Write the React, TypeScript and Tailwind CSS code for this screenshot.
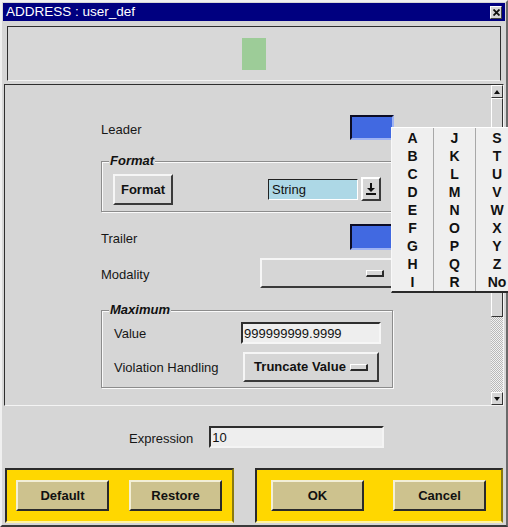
import React from 'react';

const raised = 'border-2 border-t-[#f6f6f6] border-l-[#f6f6f6] border-r-[#3a3a3a] border-b-[#3a3a3a]';
const sunken = 'border-2 border-t-[#2e2e2e] border-l-[#2e2e2e] border-r-[#f6f6f6] border-b-[#f6f6f6]';
const tanButton =
  'w-[93px] h-[31px] bg-[#cdc28e] border-2 border-t-[#f3efd6] border-l-[#f3efd6] border-r-[#2a2a2a] border-b-[#2a2a2a] flex items-center justify-center text-[13px] font-bold text-[#111]';

const letters = [
  ['A', 'B', 'C', 'D', 'E', 'F', 'G', 'H', 'I'],
  ['J', 'K', 'L', 'M', 'N', 'O', 'P', 'Q', 'R'],
  ['S', 'T', 'U', 'V', 'W', 'X', 'Y', 'Z', 'No'],
];

const Label = ({ children }: { children: React.ReactNode }) => (
  <span className="inline-block pt-[3px] text-[13px] text-[#161616] leading-none">{children}</span>
);

// little raised bar used by option menus
const OptionIndicator = () => (
  <span className="block w-[18px] h-[7px] bg-[#d6d6d6] border border-t-white border-l-white border-r-[#2a2a2a] border-b-[#2a2a2a] border-b-2 border-r-2" />
);

const GroupBox = ({ title, className, children }: { title: string; className: string; children: React.ReactNode }) => (
  <div className={`relative border border-[#8c8c8c] shadow-[inset_1px_1px_0_#fafafa,1px_1px_0_#fafafa] ${className}`}>
    <span className="absolute -top-[9px] left-[7px] bg-[#d6d6d6] px-[1px] text-[13px] leading-[16px] font-bold italic text-[#111]">
      {title}
    </span>
    {children}
  </div>
);

const ArrowButton = ({ up }: { up?: boolean }) => (
  <div className="h-[13px] bg-[#d6d6d6] border border-t-white border-l-white border-r-[#333] border-b-[#333] flex items-center justify-center">
    <svg width="6" height="4" viewBox="0 0 6 4">
      {up ? <polygon points="3,0 6,4 0,4" fill="#111" /> : <polygon points="0,0 6,0 3,4" fill="#111" />}
    </svg>
  </div>
);

export default function App() {
  return (
    <div className="relative w-[508px] h-[527px] overflow-hidden bg-[#d6d6d6] font-['Liberation_Sans',Arial,sans-serif]">
      <div className="w-[508px] h-[527px] border-2 border-t-[#f0f0f0] border-l-[#f0f0f0] border-r-[#6a6a6a] border-b-[#3a3a3a] p-[1px] flex flex-col">
        {/* title bar */}
        <div className="h-[18px] bg-[#000080] flex items-center justify-between pl-[3px] pr-[3px]">
          <span className="text-white text-[13.5px] leading-none">ADDRESS : user_def</span>
          <div className="w-[12px] h-[13px] bg-[#d6d6d6] border border-t-white border-l-white border-r-[#404040] border-b-[#404040] flex items-center justify-center">
            <svg width="7" height="7" viewBox="0 0 7 7">
              <path d="M0.5 0.5 L6.5 6.5 M6.5 0.5 L0.5 6.5" stroke="#111" strokeWidth="1.8" />
            </svg>
          </div>
        </div>

        {/* top preview panel */}
        <div className="mt-[5px] ml-[4px] w-[494px] h-[55px] bg-[#d8d8d8] border border-[#2e2e2e] border-b-[#f4f4f4] flex items-center justify-center">
          <div className="w-[24px] h-[32px] bg-[#9dcc98]" />
        </div>

        {/* main scroll panel */}
        <div className="mt-[3px] ml-[1px] w-[500px] h-[322px] border border-t-[#2e2e2e] border-l-[#2e2e2e] border-r-[#f4f4f4] border-b-[#f4f4f4] flex">
          <div className="flex-1">
            <div className="ml-[96px] w-[293px] flex flex-col">
              <div className="mt-[30px] h-[25px] flex items-center justify-between">
                <Label>Leader</Label>
                <div className="w-[44px] h-[25px] bg-[#4169e1] border-2 border-t-[#0c0c24] border-l-[#0c0c24] border-r-[#9fb3f2] border-b-[#9fb3f2]" />
              </div>

              <GroupBox title="Format" className="mt-[21px] h-[51px] w-[292px]">
                <div className="flex items-start pt-[12px] pl-[11px]">
                  <div className={`w-[60px] h-[31px] bg-[#d6d6d6] ${raised} flex items-center justify-center text-[13px] font-bold text-[#111]`}>
                    Format
                  </div>
                  <div className="ml-[95px] mt-[5px] w-[90px] h-[21px] bg-[#add8e6] border border-t-[#222] border-l-[#222] border-r-white border-b-white flex items-center pl-[3px] pt-[1px] text-[13px] text-[#111]">
                    String
                  </div>
                  <div className="ml-[3px] mt-[3px] w-[20px] h-[24px] bg-[#d6d6d6] border-2 border-t-white border-l-white border-r-[#3a3a3a] border-b-[#3a3a3a] flex items-center justify-center">
                    <svg width="10" height="12" viewBox="0 0 10 12">
                      <path d="M5 0 V7" stroke="#111" strokeWidth="2" />
                      <polygon points="1,5 9,5 5,9" fill="#111" />
                      <rect x="0" y="10" width="10" height="2" fill="#111" />
                    </svg>
                  </div>
                </div>
              </GroupBox>

              <div className="mt-[12px] h-[26px] flex items-center justify-between">
                <Label>Trailer</Label>
                <div className="w-[44px] h-[26px] bg-[#4169e1] border-2 border-t-[#0c0c24] border-l-[#0c0c24] border-r-[#9fb3f2] border-b-[#9fb3f2]" />
              </div>

              <div className="mt-[8px] h-[30px] flex items-center justify-between">
                <Label>Modality</Label>
                <div className={`w-[134px] h-[30px] bg-[#d6d6d6] ${raised} flex items-center justify-end pr-[8px]`}>
                  <OptionIndicator />
                </div>
              </div>

              <GroupBox title="Maximum" className="mt-[22px] h-[78px] w-[292px]">
                <div className="flex flex-col pl-[12px] pt-[11px]">
                  <div className="h-[22px] flex items-center">
                    <span className="w-[127px]"><Label>Value</Label></span>
                    <div className={`w-[140px] h-[22px] bg-[#eeeeee] ${sunken} flex items-center pl-[1px] pt-[1px] text-[13px] text-[#111]`}>
                      999999999.9999
                    </div>
                  </div>
                  <div className="mt-[8px] h-[30px] flex items-center">
                    <span className="w-[129px]"><Label>Violation Handling</Label></span>
                    <div className={`w-[136px] h-[30px] bg-[#d6d6d6] ${raised} flex items-center justify-center gap-[4px] text-[13px] font-bold text-[#111]`}>
                      Truncate Value
                      <OptionIndicator />
                    </div>
                  </div>
                </div>
              </GroupBox>
            </div>
          </div>

          {/* vertical scrollbar */}
          <div className="w-[12px] flex flex-col">
            <ArrowButton up />
            <div className="h-[219px] bg-[#d6d6d6] border border-t-white border-l-white border-r-[#333] border-b-[#333]" />
            <div className="flex-1 bg-[repeating-conic-gradient(#f2f2f2_0%_25%,#b8b8b8_0%_50%)] bg-[length:2px_2px]" />
            <ArrowButton />
          </div>
        </div>

        {/* expression row */}
        <div className="mt-[20px] h-[22px] flex items-center pl-[126px]">
          <Label>Expression</Label>
          <div className="ml-[16px] w-[175px] h-[22px] bg-[#eeeeee] border-2 border-t-[#2e2e2e] border-l-[#2e2e2e] border-r-[#f4f4f4] border-b-[#f4f4f4] flex items-center pl-[1px] pt-[1px] text-[13px] text-[#111]">
            10
          </div>
        </div>

        {/* bottom action panels */}
        <div className="mt-[20px] h-[55px] flex">
          <div className="ml-[2px] w-[229px] h-[55px] bg-[#ffd700] border-2 border-t-[#2a2a2a] border-l-[#2a2a2a] border-r-[#8a7a10] border-b-[#fff3a0] flex items-center pl-[9px] gap-[20px]">
            <div className={tanButton}>Default</div>
            <div className={tanButton}>Restore</div>
          </div>
          <div className="ml-[21px] w-[248px] h-[55px] bg-[#ffd700] border-2 border-t-[#2a2a2a] border-l-[#2a2a2a] border-r-[#8a7a10] border-b-[#fff3a0] flex items-center pl-[14px] gap-[29px]">
            <div className={tanButton}>OK</div>
            <div className={tanButton}>Cancel</div>
          </div>
        </div>
      </div>

      {/* letter popup menu */}
      <div className="absolute left-[391px] top-[127px] w-[130px] h-[166px] bg-[#efefef] border-t border-l border-t-white border-l-[#f8f8f8] border-b-2 border-b-[#2a2a2a] flex">
        {letters.map((col, i) => (
          <div key={i} className={`w-[42px] flex flex-col pt-[1px] ${i < 2 ? 'border-r border-[#a8a8a8]' : ''}`}>
            {col.map((l) => (
              <span key={l} className="h-[18px] flex items-center justify-center text-[14px] font-bold text-[#111]">
                {l}
              </span>
            ))}
          </div>
        ))}
      </div>
    </div>
  );
}
